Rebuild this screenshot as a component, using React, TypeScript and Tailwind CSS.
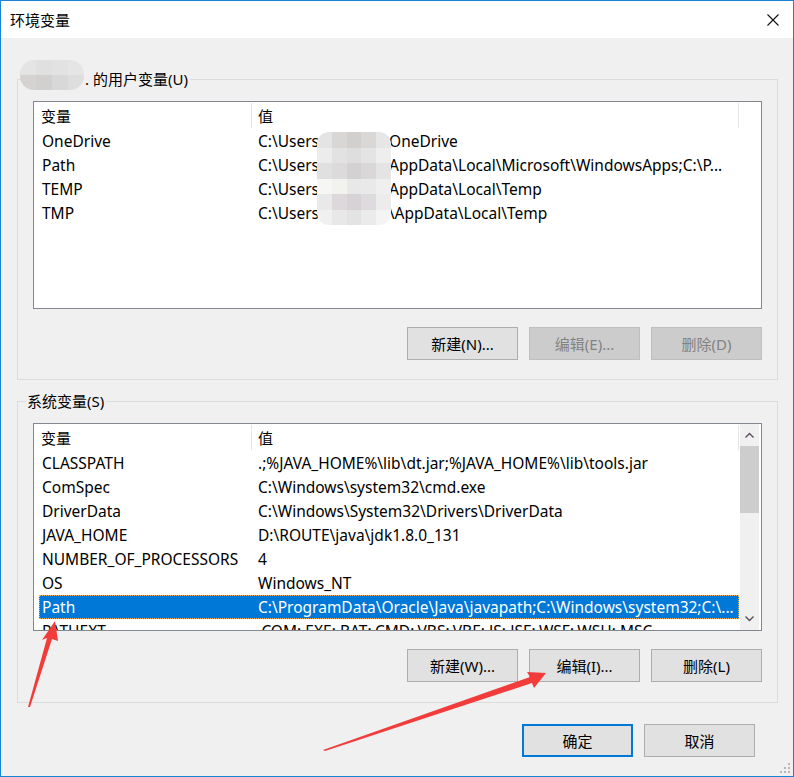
import type { ReactNode } from "react";

// Windows 10 "环境变量" dialog

const FONT = { fontFamily: '"Noto Sans", "Noto Sans CJK SC", sans-serif' };

type Row = { name: string; value: ReactNode; selected?: boolean };

const userRows: Row[] = [
  { name: "OneDrive", value: <>C:\Users<span className="inline-block w-[70px]" />OneDrive</> },
  {
    name: "Path",
    value: <>C:\Users<span className="inline-block w-[70px]" />AppData\Local\Microsoft\WindowsApps;C:\P...</>,
  },
  { name: "TEMP", value: <>C:\Users<span className="inline-block w-[70px]" />AppData\Local\Temp</> },
  { name: "TMP", value: <>C:\Users\<span className="inline-block w-[64px]" />\AppData\Local\Temp</> },
];

const systemRows: Row[] = [
  { name: "CLASSPATH", value: ".;%JAVA_HOME%\\lib\\dt.jar;%JAVA_HOME%\\lib\\tools.jar" },
  { name: "ComSpec", value: "C:\\Windows\\system32\\cmd.exe" },
  { name: "DriverData", value: "C:\\Windows\\System32\\Drivers\\DriverData" },
  { name: "JAVA_HOME", value: "D:\\ROUTE\\java\\jdk1.8.0_131" },
  { name: "NUMBER_OF_PROCESSORS", value: "4" },
  { name: "OS", value: "Windows_NT" },
  { name: "Path", value: "C:\\ProgramData\\Oracle\\Java\\javapath;C:\\Windows\\system32;C:\\...", selected: true },
  { name: "PATHEXT", value: ".COM;.EXE;.BAT;.CMD;.VBS;.VBE;.JS;.JSE;.WSF;.WSH;.MSC" },
];

// pixelated blur over the user name
const Mosaic = ({ cells, className }: { cells: string[][]; className: string }) => (
  <div className={`absolute flex flex-col overflow-hidden ${className}`}>
    {cells.map((line, i) => (
      <div key={i} className="flex flex-1">
        {line.map((c, j) => (
          <div key={j} className="flex-1" style={{ backgroundColor: c }} />
        ))}
      </div>
    ))}
  </div>
);

const listBlur = [
  ["#e4e4e4", "#d9d6d6", "#d2cfcf", "#dad7d7", "#e6e6e6"],
  ["#ececec", "#e2e2e2", "#dedede", "#e4e4e4", "#eeeeee"],
  ["#e0e0e0", "#dcdada", "#d3d1d1", "#d9d7d7", "#e4e4e4"],
  ["#f6f6f2", "#f2f2ee", "#e8e8e8", "#e9e9e9", "#efefef"],
  ["#e9e9e9", "#dcd8dc", "#d6d2d6", "#dedbde", "#ececec"],
  ["#f0f0f0", "#e8e8e8", "#e3e3e3", "#ebebeb", "#f4f4f4"],
];

const legendBlur = [
  ["#e4e4e4", "#e0e0e0", "#e2e2e2", "#e5e5e5"],
  ["#d7d2d2", "#d2cfcf", "#d8d8d8", "#dedede"],
];

const Chevron = ({ down }: { down?: boolean }) => (
  <svg width="9" height="6" viewBox="0 0 9 6" className={down ? "rotate-180" : ""}>
    <path d="M0.5 5.5 L4.5 1.5 L8.5 5.5" fill="none" stroke="#5d4b5f" strokeWidth="1.4" />
  </svg>
);

const VarList = ({ rows, scroll, blur }: { rows: Row[]; scroll?: boolean; blur?: boolean }) => (
  <div className="relative mt-[12px] flex h-[208px] overflow-hidden border border-[#828790] bg-white">
    <div className="ml-[5px] flex w-[700px] flex-col">
      <div className="flex h-[27px] shrink-0 items-center text-black">
        <div className="flex h-[25px] w-[213px] items-center border-r border-[#e5e5e5] pl-[2px]">变量</div>
        <div className="flex h-[25px] w-[487px] items-center border-r border-[#e5e5e5] pl-[6px]">值</div>
      </div>
      {rows.map((r) => (
        <div
          key={r.name}
          className={`flex h-[24px] shrink-0 items-center whitespace-nowrap text-[15.5px] ${
            r.selected ? "bg-[#0078d7] text-white outline-1 -outline-offset-1 outline-dotted outline-[#f3b25a]" : "text-black"
          }`}
        >
          <div className="w-[212px] pl-[3px]">{r.name}</div>
          <div className="pl-[7px]">{r.value}</div>
        </div>
      ))}
    </div>
    {scroll && (
      <div className="ml-[1px] flex w-[19px] flex-col bg-[#f0f0f0]">
        <div className="flex h-[22px] items-center justify-center">
          <Chevron />
        </div>
        <div className="h-[67px] bg-[#cdcdcd]" />
        <div className="flex-1" />
        <div className="flex h-[22px] items-center justify-center">
          <Chevron down />
        </div>
      </div>
    )}
    {blur && <Mosaic cells={listBlur} className="left-[283px] top-[30px] h-[93px] w-[74px] rounded-[12px]" />}
  </div>
);

const Button = ({ children, disabled, primary }: { children: ReactNode; disabled?: boolean; primary?: boolean }) => (
  <div
    className={`flex h-[33px] w-[111px] items-center justify-center ${
      disabled
        ? "border border-[#bfbfbf] bg-[#cccccc] text-[#838383]"
        : primary
        ? "border-2 border-[#0078d7] bg-[#e1e1e1] text-black"
        : "border border-[#adadad] bg-[#e1e1e1] text-black"
    }`}
  >
    {children}
  </div>
);

export default function App() {
  return (
    <div
      className="relative flex h-[777px] w-[794px] flex-col border border-[#1883d7] bg-[#f0f0f0] text-[15px] leading-[20px]"
      style={FONT}
    >
      <div className="flex h-[37px] shrink-0 items-center justify-between bg-white pl-[9px] pr-[14px]">
        <span className="text-black">环境变量</span>
        <svg width="12" height="12" viewBox="0 0 12 12">
          <path d="M0.5 0.5 L11.5 11.5 M11.5 0.5 L0.5 11.5" stroke="#111" strokeWidth="1.1" />
        </svg>
      </div>

      <div className="flex flex-col pl-[16px] pr-[15px]">
        <fieldset className="mt-[31px] border border-[#dcdcdc] px-[15px] pb-[19px]">
          <legend className="relative -ml-[7px] pl-px pr-[2px] text-black">
            <span className="relative inline-block w-[58px]">
              <Mosaic cells={legendBlur} className="-left-[7px] -top-[9px] h-[30px] w-[64px] rounded-[14px]" />
              &nbsp;
            </span>
            . 的用户变量(U)
          </legend>
          <VarList rows={userRows} blur />
          <div className="mt-[18px] flex justify-end gap-[11px]">
            <Button>新建(N)...</Button>
            <Button disabled>编辑(E)...</Button>
            <Button disabled>删除(D)</Button>
          </div>
        </fieldset>

        <fieldset className="mt-[11px] border border-[#dcdcdc] px-[15px] pb-[20px]">
          <legend className="-ml-[7px] pl-px pr-[2px] text-black">系统变量(S)</legend>
          <VarList rows={systemRows} scroll />
          <div className="mt-[18px] flex justify-end gap-[11px]">
            <Button>新建(W)...</Button>
            <Button>编辑(I)...</Button>
            <Button>删除(L)</Button>
          </div>
        </fieldset>

        <div className="mr-[23px] mt-[21px] flex justify-end gap-[11px]">
          <Button primary>确定</Button>
          <Button>取消</Button>
        </div>
      </div>

      {/* resize grip */}
      <div className="absolute bottom-[3px] right-[3px] grid grid-cols-3 gap-[2px]">
        {[0, 0, 1, 0, 1, 1, 1, 1, 1].map((on, i) => (
          <div key={i} className={`h-[2px] w-[2px] ${on ? "bg-[#b8b8b8]" : ""}`} />
        ))}
      </div>

      {/* red annotation arrows */}
      <svg
        className="pointer-events-none absolute -left-px -top-px"
        width="794"
        height="777"
        viewBox="0 0 794 777"
      >
        <polygon points="28,707 47,638 42,640 55,621 58,641 52,639 30,707" fill="#f23c3c" />
        <polygon points="323,750 530,677 527,672 546,673 534,688 532,683 325,751" fill="#f23c3c" />
      </svg>
    </div>
  );
}
